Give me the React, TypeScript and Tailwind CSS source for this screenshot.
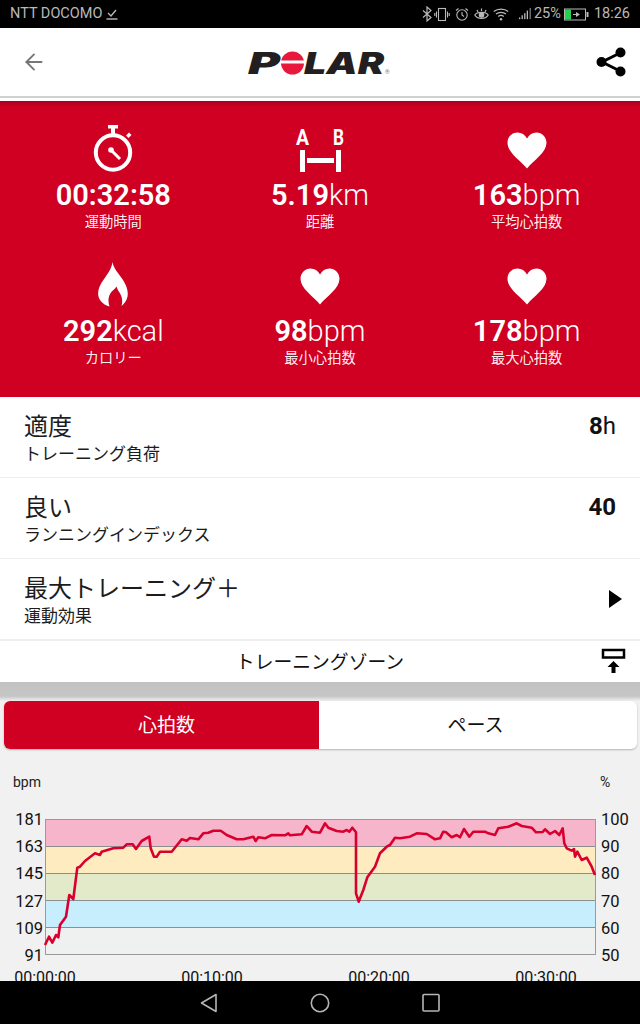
import type { ReactNode } from 'react'
import { ArrowLeft } from 'lucide-react'

const FONT = "font-['Roboto','Noto_Sans_CJK_JP',sans-serif]"

// traced from the reference, x/y in px of the page
const hrLeft = [
  [135, 435], [147, 410], [157, 428], [168, 405], [175, 412], [180, 375], [198, 350], [208, 285], [220, 297], [232, 203],
  [240, 200], [255, 183], [285, 160], [300, 165], [305, 155], [340, 145], [370, 143], [380, 133], [398, 133], [408, 147],
  [425, 123], [448, 110], [452, 145], [462, 170], [470, 170], [480, 155], [515, 155], [545, 118], [560, 122], [570, 114],
  [595, 118], [610, 100], [625, 98], [640, 92], [662, 92], [680, 105], [710, 118], [730, 118], [760, 110], [767, 123],
  [775, 112], [795, 115], [815, 105], [855, 106], [865, 100], [870, 106], [905, 103], [920, 78], [935, 95], [960, 98],
].map(([x, y]) => `${(x / 3).toFixed(1)},${(800 + y / 3).toFixed(1)}`)

const hrRight = [
  [15, 70], [25, 83], [50, 93], [70, 95], [80, 90], [88, 95], [97, 83], [108, 97], [108, 280], [116, 305],
  [130, 270], [142, 232], [165, 200], [180, 160], [200, 140], [210, 135], [225, 113], [240, 115], [270, 110], [290, 100],
  [320, 102], [345, 118], [360, 115], [370, 95], [378, 97], [395, 112], [410, 105], [420, 112], [432, 87], [448, 110],
  [460, 95], [495, 95], [505, 100], [525, 105], [535, 85], [565, 80], [590, 70], [605, 78], [635, 83], [648, 97],
  [668, 96], [675, 88], [690, 102], [705, 93], [718, 105], [728, 85], [733, 130], [740, 145], [755, 152], [762, 147],
  [765, 170], [772, 155], [785, 180], [800, 173], [815, 200], [825, 225],
].map(([x, y]) => `${(320 + x / 3).toFixed(1)},${(800 + y / 3).toFixed(1)}`)

const bands = [
  { y: 819, h: 27, fill: '#f6b5cb' },
  { y: 846, h: 27, fill: '#feecc0' },
  { y: 873, h: 27, fill: '#e2eac9' },
  { y: 900, h: 27, fill: '#c6eefc' },
  { y: 927, h: 28, fill: '#eff0f0' },
]

function Heart() {
  return (
    <svg viewBox="0 0 40 37" className="mt-[3px] h-[37px] w-10" aria-hidden="true">
      <path d="M20 36.500C13 28 .5 20.500 .5 10.800 .5 4.800 5 .5 10.500 .5 14.500 .5 18 2.600 20 6.500 22 2.600 25.500 .5 29.500 .5 35 .5 39.500 4.800 39.500 10.800 39.500 20.500 27 28 20 36.500Z" fill="#fff" />
    </svg>
  )
}

function Stopwatch() {
  return (
    <svg viewBox="0 0 40 47" className="h-[47px] w-10" aria-hidden="true">
      <rect x="15" y="0" width="10" height="3.500" fill="#fff" />
      <rect x="18" y="3" width="4" height="6" fill="#fff" />
      <path d="M33 10.500l3 -3 2.500 2.500-3 3Z" fill="#fff" />
      <circle cx="20" cy="27.500" r="17.200" fill="none" stroke="#fff" strokeWidth="4" />
      <circle cx="18" cy="25" r="2.800" fill="#fff" />
      <path d="M18 25l9 9" stroke="#fff" strokeWidth="3" />
    </svg>
  )
}

function Distance() {
  const label = { fontSize: 22, fontWeight: 700, fill: '#fff', fontFamily: 'Roboto, sans-serif', lengthAdjust: 'spacingAndGlyphs' } as const
  return (
    <svg viewBox="-2 -8 52 54" className="h-[54px] w-[52px] self-end" aria-hidden="true">
      <text x="0" y="19" textLength="13" {...label}>A</text>
      <text x="37" y="19" textLength="11" {...label}>B</text>
      <rect x="4" y="24" width="5" height="22" fill="#fff" />
      <rect x="11" y="32" width="27" height="5" fill="#fff" />
      <rect x="40" y="24" width="5" height="22" fill="#fff" />
    </svg>
  )
}

function Flame() {
  return (
    <svg viewBox="0 0 30 45" className="h-[45px] w-[30px]" aria-hidden="true">
      <path
        d="M14.500 0C15.500 7 21 11.500 25 18 28.500 23.500 30.500 29 29.500 34.500 28.800 38.500 26.500 41.500 23.500 44 24.500 40.500 24.500 36.500 22.800 33 21.700 30.500 19.500 28 18.500 24.500 16.800 27.500 14 28.500 12.300 31.500 10 35.500 10 40 11.500 44.500 7 43.500 2.500 40 .8 35.500-1 30.500 1 24.500 4 20 7.500 14.500 13.500 8 14.500 0Z"
        fill="#fff"
      />
    </svg>
  )
}

function Stat({ icon, value, unit, label }: { icon: ReactNode; value: string; unit?: string; label: string }) {
  return (
    <div className="flex h-[136px] flex-col items-center">
      <div className="flex h-[47px] items-center justify-center">{icon}</div>
      <div className="mt-[5px] text-[29px] leading-[36px] text-white">
        <span className="font-semibold">{value}</span>
        <span className="font-[350]">{unit}</span>
      </div>
      <div className="mt-[-1px] text-[14.300px] leading-[20px] text-white/95">{label}</div>
    </div>
  )
}

function InfoRow({ title, sub, right, last }: { title: string; sub: string; right?: ReactNode; last?: boolean }) {
  return (
    <div
      className={`flex justify-between bg-white pl-[24px] pr-[24px] ${
        last ? 'h-[82px] border-b-2 border-[#efefef]' : 'h-[81px] border-b border-[#eeeeee]'
      }`}
    >
      <div className="pt-[15px] text-[#1c1c1c]">
        <div className="text-[24px] leading-[30px]">{title}</div>
        <div className="text-[17px] leading-[24px]">{sub}</div>
      </div>
      {right}
    </div>
  )
}

function StatusBar() {
  return (
    <div className="flex h-[28px] items-center bg-black pl-[10px] pr-[10px] text-[14.500px] text-[#b9b9b9]">
      <span>NTT DOCOMO</span>
      <svg viewBox="0 0 12 12" className="ml-[4px] h-3 w-3" fill="none" stroke="#b9b9b9" aria-hidden="true">
        <path d="M2 5l3 3 5-6" strokeWidth="1.400" />
        <path d="M.5 11h11" strokeWidth="1.400" />
      </svg>
      <div className="ml-auto flex items-center">
        <svg viewBox="0 0 10 16" className="h-[16px] w-[10px]" fill="none" stroke="#b9b9b9" strokeWidth="1.200" aria-hidden="true">
          <path d="M1 4.500l8 7-4 3.500V1l4 3.500-8 7" />
        </svg>
        <svg viewBox="0 0 16 14" className="ml-[2px] h-[15px] w-4" fill="none" stroke="#b9b9b9" strokeWidth="1.100" aria-hidden="true">
          <rect x="4.500" y="1" width="7" height="12" />
          <path d="M2.500 4v6M.8 5.500v3M13.500 4v6M15.200 5.500v3" />
        </svg>
        <svg viewBox="0 0 14 14" className="ml-[5px] h-[15px] w-[14px]" fill="none" stroke="#b9b9b9" strokeWidth="1.100" aria-hidden="true">
          <circle cx="7" cy="7.500" r="5.200" />
          <path d="M7 4.500v3l2 1.500M1 3l2.500-2M13 3l-2.500-2" />
        </svg>
        <svg viewBox="0 0 15 14" className="ml-[5px] h-[14px] w-[15px]" fill="none" stroke="#b9b9b9" strokeWidth="1.200" aria-hidden="true">
          <path d="M.8 8C3 4.500 12 4.500 14.200 8 12 12.500 3 12.500 .8 8Z" />
          <circle cx="7.500" cy="8" r="2.200" fill="#b9b9b9" />
          <path d="M3 3l1 2M7.500 1.500v2.500M12 3l-1 2" />
        </svg>
        <svg viewBox="0 0 16 13" className="ml-[4px] h-[13px] w-4" fill="none" stroke="#b9b9b9" strokeWidth="1.200" aria-hidden="true">
          <path d="M.8 3.500C4.500 .2 11.500 .2 15.200 3.500M3 6c2.800-2.300 7.200-2.300 10 0M5.200 8.500c1.500-1.100 4.100-1.100 5.600 0" />
          <circle cx="8" cy="11.300" r="1.200" fill="#b9b9b9" stroke="none" />
        </svg>
        <svg viewBox="0 0 14 14" className="ml-[10px] h-[14px] w-[12px]" fill="#b9b9b9" aria-hidden="true">
          <rect x="0" y="11" width="1.500" height="2" />
          <rect x="3" y="8.500" width="1.500" height="4.500" />
          <rect x="6" y="6" width="1.500" height="7" />
          <rect x="9" y="3" width="1.500" height="10" />
          <rect x="12.500" y="0" width="1" height="13" />
        </svg>
        <span className="ml-[3px]">25%</span>
        <svg viewBox="0 0 25 13" className="ml-[3px] h-[13px] w-[25px]" aria-hidden="true">
          <rect x=".5" y="1" width="21" height="11" fill="none" stroke="#b9b9b9" />
          <rect x="1" y="1.500" width="6" height="10" fill="#22d24f" />
          <rect x="22.500" y="4" width="2" height="5" fill="#b9b9b9" />
          <path d="M9 6h3V4l4 2.500-4 2.500V7H9Z" fill="#b9b9b9" />
        </svg>
        <span className="ml-[5px]">18:26</span>
      </div>
    </div>
  )
}

function PolarLogo() {
  const text = {
    fontFamily: 'Inter, sans-serif',
    fontWeight: 900,
    fontStyle: 'italic',
    fontSize: 30,
    fill: '#231f20',
    lengthAdjust: 'spacingAndGlyphs',
  } as const
  return (
    <svg viewBox="-4 -8 152 40" className="h-10 w-[152px]" aria-hidden="true">
      <text x="0" y="22.500" textLength="32" {...text}>P</text>
      <circle cx="44.500" cy="12" r="11.500" fill="#e8173c" />
      <rect x="32" y="9.500" width="25" height="3" fill="#fff" />
      <text x="56" y="22.500" textLength="80" {...text}>LAR</text>
      <text x="137" y="22.500" fontSize="6" fill="#777" fontFamily="Roboto, sans-serif">®</text>
    </svg>
  )
}

function HrChart() {
  const leftLabels = ['181', '163', '145', '127', '109', '91']
  const rightLabels = ['100', '90', '80', '70', '60', '50']
  const times = [
    { x: 45, t: '00:00:00' },
    { x: 212, t: '00:10:00' },
    { x: 379, t: '00:20:00' },
    { x: 546, t: '00:30:00' },
  ]
  return (
    <svg viewBox="0 749 640 232" className="block h-[232px] w-[640px]" fontFamily="Roboto, sans-serif" aria-hidden="true">
      <text x="13" y="787" fontSize="14" fill="#222">bpm</text>
      <text x="600" y="787" fontSize="14" fill="#222">%</text>
      {bands.map((b) => (
        <g key={b.y}>
          <rect x="45" y={b.y} width="550" height={b.h} fill={b.fill} />
          <line x1="45" x2="595" y1={b.y + 0.5} y2={b.y + 0.5} stroke="#8e8e8e" />
        </g>
      ))}
      <rect x="45.500" y="819.500" width="550" height="135" fill="none" stroke="#9a9a9a" />
      <polyline points={[...hrLeft, ...hrRight].join(' ')} fill="none" stroke="#d9002f" strokeWidth="2.600" strokeLinejoin="round" />
      {leftLabels.map((l, i) => (
        <text key={l} x="43" y={825 + i * 27.200} textAnchor="end" fontSize="16.500" fill="#111">{l}</text>
      ))}
      {rightLabels.map((l, i) => (
        <text key={l} x="601" y={825 + i * 27.200} fontSize="16.500" fill="#111">{l}</text>
      ))}
      {times.map((t) => (
        <text key={t.t} x={t.x} y="983" textAnchor="middle" fontSize="16" fill="#111">{t.t}</text>
      ))}
    </svg>
  )
}

export default function App() {
  return (
    <div className={`flex h-[1024px] w-[640px] flex-col overflow-hidden bg-[#f1f1f1] ${FONT}`}>
      <StatusBar />

      <header className="relative flex h-[68px] items-center justify-center bg-white">
        <button type="button" className="absolute left-[21px] top-[21px] text-[#757575]">
          <ArrowLeft size={26} strokeWidth={1.700} />
        </button>
        <div className="ml-[-1px] mt-[1px]">
          <PolarLogo />
        </div>
        <svg viewBox="0 0 30 30" className="absolute right-[14px] top-[19px] h-[30px] w-[30px]" aria-hidden="true">
          <path d="M24 6L6 15l18 9" fill="none" stroke="#000" strokeWidth="3" />
          <circle cx="24.500" cy="5.500" r="5" fill="#000" />
          <circle cx="5.500" cy="15" r="5" fill="#000" />
          <circle cx="24.500" cy="24.500" r="5" fill="#000" />
        </svg>
      </header>
      <div className="h-[5px] border-t-2 border-[#d0d0d0] bg-white" />

      <section className="h-[296px] bg-[linear-gradient(180deg,#ad0020_0px,#cf0022_6px)] px-[10px] pt-[24px]">
        <div className="grid grid-cols-3">
          <Stat icon={<Stopwatch />} value="00:32:58" label="運動時間" />
          <Stat icon={<Distance />} value="5.19" unit="km" label="距離" />
          <Stat icon={<Heart />} value="163" unit="bpm" label="平均心拍数" />
          <Stat icon={<Flame />} value="292" unit="kcal" label="カロリー" />
          <Stat icon={<Heart />} value="98" unit="bpm" label="最小心拍数" />
          <Stat icon={<Heart />} value="178" unit="bpm" label="最大心拍数" />
        </div>
      </section>

      <InfoRow
        title="適度"
        sub="トレーニング負荷"
        right={
          <div className="pt-[14px] text-[24px] leading-[30px] text-[#111]">
            <span className="font-bold">8</span>h
          </div>
        }
      />
      <InfoRow
        title="良い"
        sub="ランニングインデックス"
        right={<div className="pt-[14px] text-[24px] font-bold leading-[30px] text-[#111]">40</div>}
      />
      <InfoRow
        last
        title="最大トレーニング＋"
        sub="運動効果"
        right={
          <div className="mr-[-6px] flex items-center">
            <svg viewBox="0 0 13 18" className="h-[18px] w-[13px]" aria-hidden="true">
              <path d="M0 0l13 9-13 9Z" fill="#000" />
            </svg>
          </div>
        }
      />

      <div className="relative flex h-[41px] items-center justify-center bg-white pt-[3px] text-[18.800px] text-[#111]">
        トレーニングゾーン
        <svg viewBox="0 0 26 26" className="absolute right-[13px] top-[7px] h-[26px] w-[26px]" aria-hidden="true">
          <rect x="2" y="2" width="21" height="7.500" fill="none" stroke="#000" strokeWidth="2.500" />
          <path d="M12.500 13l6 6h-4v6h-4v-6h-4Z" fill="#000" />
        </svg>
      </div>
      <div className="h-[19px] bg-[linear-gradient(180deg,#c2c2c2_0%,#c6c6c6_75%,#f1f1f1_100%)]" />

      <div className="ml-1 mr-[3px] flex h-[48px] shrink-0 overflow-hidden rounded-md bg-white text-[19px] shadow-[0_1px_2px_rgba(0,0,0,0.25)]">
        <div className="flex w-[315px] items-center justify-center bg-[#cf0022] pl-[10px] pt-[2px] text-white">心拍数</div>
        <div className="flex flex-1 items-center justify-center pr-[5px] pt-[2px] text-[#111]">ペース</div>
      </div>

      <div className="h-[232px] shrink-0 overflow-hidden">
        <HrChart />
      </div>

      <nav className="flex h-[43px] shrink-0 items-center justify-center bg-black">
        <svg viewBox="0 0 240 20" className="ml-[-1px] h-5 w-[240px]" fill="none" stroke="#b5b5b5" strokeWidth="1.600" aria-hidden="true">
          <path d="M16 1.500v17L1.500 10Z" strokeLinejoin="round" />
          <circle cx="120" cy="10" r="8.700" />
          <rect x="223" y="1.500" width="16" height="16.500" rx="1" />
        </svg>
      </nav>
    </div>
  )
}
